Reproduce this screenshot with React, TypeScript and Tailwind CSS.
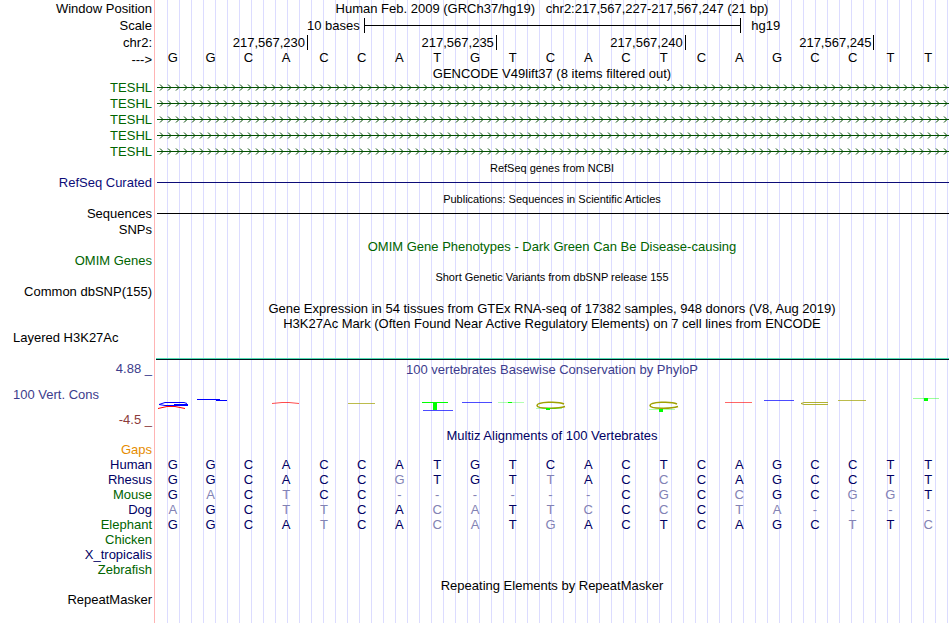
import React from 'react';
import { clsx } from 'clsx';

const BASES = 'GGCACCATGTCACTCAGCCTT';

const TICKS = ['217,567,230', '217,567,235', '217,567,240', '217,567,245'];

const GENES = ['TESHL', 'TESHL', 'TESHL', 'TESHL', 'TESHL'];

const SPECIES = [
  { name: 'Human', color: 'text-[#000064]', bases: 'GGCACCATGTCACTCAGCCTT' },
  { name: 'Rhesus', color: 'text-[#000064]', bases: 'GGCACCGTGTTACCCAGCCTT' },
  { name: 'Mouse', color: 'text-[#006400]', bases: 'GACTCC------CGCCGCGGT' },
  { name: 'Dog', color: 'text-[#000064]', bases: 'AGCTTCACATTCCCCTA----' },
  { name: 'Elephant', color: 'text-[#006400]', bases: 'GGCATCACATGACTCAGCTTC' },
  { name: 'Chicken', color: 'text-[#006400]', bases: '' },
  { name: 'X_tropicalis', color: 'text-[#000064]', bases: '' },
  { name: 'Zebrafish', color: 'text-[#006400]', bases: '' },
];

interface RowProps {
  label?: string;
  labelClass?: string;
  className?: string;
  children?: React.ReactNode;
}

const Row: React.FC<RowProps> = ({ label, labelClass, className, children }) => (
  <div className={clsx('flex', className)}>
    <div className={clsx('w-[154px] shrink-0 self-center pr-0.5 text-right', labelClass)}>
      {label}
    </div>
    <div className="min-w-0 flex-1 self-center">{children}</div>
  </div>
);

interface TrackTitleProps {
  small?: boolean;
  className?: string;
  children: React.ReactNode;
}

const TrackTitle: React.FC<TrackTitleProps> = ({ small, className, children }) => (
  <h2
    className={clsx(
      'ml-[154px] flex items-center justify-center whitespace-pre',
      small && 'text-[11px]',
      className,
    )}
  >
    {children}
  </h2>
);

const BaseRow: React.FC<{ bases: string; reference?: string }> = ({ bases, reference }) => (
  <div className="mr-[3px] grid grid-cols-21 text-center">
    {bases.split('').map((base, i) => (
      <span
        key={i}
        className={clsx(
          reference && (base === reference[i] ? 'text-[#000064]' : 'text-[#8282b4]'),
        )}
      >
        {base}
      </span>
    ))}
  </div>
);

// Intron line with strand arrows every 8px
const GeneLine: React.FC<{ id: string }> = ({ id }) => (
  <svg className="ml-[3px] block h-2 w-[calc(100%-4px)]" aria-hidden="true">
    <defs>
      <pattern id={id} width="8" height="8" patternUnits="userSpaceOnUse">
        <path d="M3 1.5 L6 4.5 L3 7.5" fill="none" stroke="#004600" strokeWidth="1" />
      </pattern>
    </defs>
    <rect width="100%" height="8" fill={`url(#${id})`} />
    <rect y="4" width="100%" height="1" fill="#005000" />
  </svg>
);

const ConservationLogo: React.FC = () => (
  <svg
    className="block h-[18px] w-full"
    viewBox="0 0 796 18"
    preserveAspectRatio="none"
    fill="none"
    aria-hidden="true"
  >
    <g stroke="#0000ff">
      <path d="M33 6.5 L30 5.5 H11 L5 7.5 L11 8.5 H34 M20 7.5 H34" />
      <path d="M43 2.5 H66 M62 3.5 H73" />
      <path d="M269 13.5 H299" opacity=".7" />
      <path d="M308 5.5 H338" opacity=".7" />
      <path d="M610 3.5 H640" opacity=".7" />
    </g>
    <g stroke="#ff0000">
      <path d="M4 11.5 L13 9.5 H21 L31 11.5" />
      <path d="M118 6.5 L128 5.5 H135 L145 6.5" opacity=".7" />
      <path d="M571 5.5 H598" opacity=".6" />
    </g>
    <g stroke="#a0a000">
      <path d="M194 6.5 H221" opacity=".7" />
      <path d="M410 7 C404 4 383 5 383 8.5 C383 12 404 12 411 9.5" strokeWidth="1.5" />
      <path d="M523 7 C517 4 496 5 496 8.5 C496 12 517 12 524 9.5" strokeWidth="1.5" />
      <path d="M674 5.5 H650 L647 6.5 L650 7.5 H674" opacity=".8" />
      <path d="M684 3.5 H712" opacity=".7" />
    </g>
    <g fill="#00ff00">
      <rect x="268" y="5" width="26" height="1" />
      <rect x="279" y="6" width="4" height="7" />
      <rect x="344" y="5" width="26" height="1" opacity=".3" />
      <rect x="354" y="5" width="4" height="1" />
      <rect x="382" y="11" width="26" height="1" opacity=".3" />
      <rect x="392" y="11" width="4" height="2" />
      <rect x="495" y="12" width="26" height="1" opacity=".3" />
      <rect x="505" y="12" width="4" height="3" />
      <rect x="759" y="1" width="26" height="1" opacity=".4" />
      <rect x="770" y="1" width="4" height="3" />
    </g>
  </svg>
);

const App: React.FC = () => {
  return (
    <main className="min-h-screen overflow-hidden bg-white bg-[linear-gradient(to_right,#ffb4b4_0_1px,#ffffff_1px_2px,transparent_2px),repeating-linear-gradient(to_right,transparent_0_1px,#dcdcff_1px_2px,transparent_2px_12px)] bg-[position:154px_0] bg-no-repeat font-['Liberation_Sans',Arial,sans-serif] text-[13px] leading-[15px] text-black">
      <Row label="Window Position" className="h-[17px]">
        <h1 className="text-center whitespace-pre">
          {'Human Feb. 2009 (GRCh37/hg19)   chr2:217,567,227-217,567,247 (21 bp)'}
        </h1>
      </Row>
      <Row label="Scale" className="h-4">
        <div className="mr-px ml-0.5 flex items-center">
          <div className="flex-1 text-right">
            <span className="pr-1">10 bases</span>
          </div>
          <div className="flex h-[15px] w-10/21 items-center border-x border-black">
            <div className="h-px w-full bg-black" />
          </div>
          <div className="flex-1">
            <span className="pl-2.5">hg19</span>
          </div>
        </div>
      </Row>
      <Row label="chr2:" className="h-[18px]">
        <div className="ml-[3px] grid grid-cols-21">
          {TICKS.map((tick, i) => (
            <span
              key={tick}
              className={clsx(
                'border-r border-black pr-0.5 text-right',
                i === 0 ? 'col-span-4' : 'col-span-5',
              )}
            >
              {tick}
            </span>
          ))}
        </div>
      </Row>
      <Row label="--->" className="h-4 leading-[15px]">
        <div className="pb-1">
          <BaseRow bases={BASES} />
        </div>
      </Row>

      <TrackTitle className="h-3">GENCODE V49lift37 (8 items filtered out)</TrackTitle>
      {GENES.map((gene, i) => (
        <Row key={i} label={gene} labelClass="text-[#006400]" className="h-4">
          <GeneLine id={`gene-${i}`} />
        </Row>
      ))}

      <TrackTitle small className="h-4 pt-0.5">RefSeq genes from NCBI</TrackTitle>
      <Row label="RefSeq Curated" labelClass="text-[#0c0c78]" className="h-[15px]">
        <div className="mr-px ml-[3px] h-px bg-[#0c0c78]" />
      </Row>

      <TrackTitle small className="h-[15px] pt-1">
        Publications: Sequences in Scientific Articles
      </TrackTitle>
      <Row label="Sequences" className="h-4">
        <div className="mr-px ml-[3px] h-px bg-black" />
      </Row>
      <Row label="SNPs" className="h-4" />

      <TrackTitle className="h-4 pt-0.5 text-[#006400]">
        OMIM Gene Phenotypes - Dark Green Can Be Disease-causing
      </TrackTitle>
      <Row label="OMIM Genes" labelClass="text-[#006400]" className="h-[15px]" />

      <TrackTitle small className="h-4 pt-0.5">
        Short Genetic Variants from dbSNP release 155
      </TrackTitle>
      <Row label="Common dbSNP(155)" className="h-[15px]" />

      <TrackTitle className="h-4 pt-0.5">
        Gene Expression in 54 tissues from GTEx RNA-seq of 17382 samples, 948 donors (V8, Aug 2019)
      </TrackTitle>
      <TrackTitle className="h-[15px] pt-0.5">
        H3K27Ac Mark (Often Found Near Active Regulatory Elements) on 7 cell lines from ENCODE
      </TrackTitle>
      <div className="flex h-[31px]">
        <div className="w-[154px] shrink-0 pl-[13px]">Layered H3K27Ac</div>
        <div className="mr-px ml-0.5 flex flex-1 flex-col justify-end pb-px">
          <div className="h-px bg-[#50dcb4]" />
          <div className="h-px bg-[#00141e]" />
        </div>
      </div>

      <div className="flex h-[66px] text-[#3c3c8c]">
        <div className="flex w-[154px] shrink-0 flex-col justify-between pr-0.5 pl-[13px]">
          <span className="text-right">4.88 _</span>
          <span>100 Vert. Cons</span>
          <span className="text-right text-[#8c3c3c]">-4.5 _</span>
        </div>
        <div className="flex-1">
          <h2 className="pt-px pb-5 text-center">100 vertebrates Basewise Conservation by PhyloP</h2>
          <ConservationLogo />
        </div>
      </div>

      <TrackTitle className="h-[15px] pt-0.5 text-[#000064]">
        Multiz Alignments of 100 Vertebrates
      </TrackTitle>
      <Row label="Gaps" labelClass="text-[#e68c00]" className="h-[15px]" />
      {SPECIES.map(({ name, color, bases }) => (
        <Row key={name} label={name} labelClass={color} className="h-[15px]">
          {bases && <BaseRow bases={bases} reference={BASES} />}
        </Row>
      ))}

      <TrackTitle className="h-[15px] pt-0.5">Repeating Elements by RepeatMasker</TrackTitle>
      <Row label="RepeatMasker" className="h-[15px]" />
    </main>
  );
};

export default App;
